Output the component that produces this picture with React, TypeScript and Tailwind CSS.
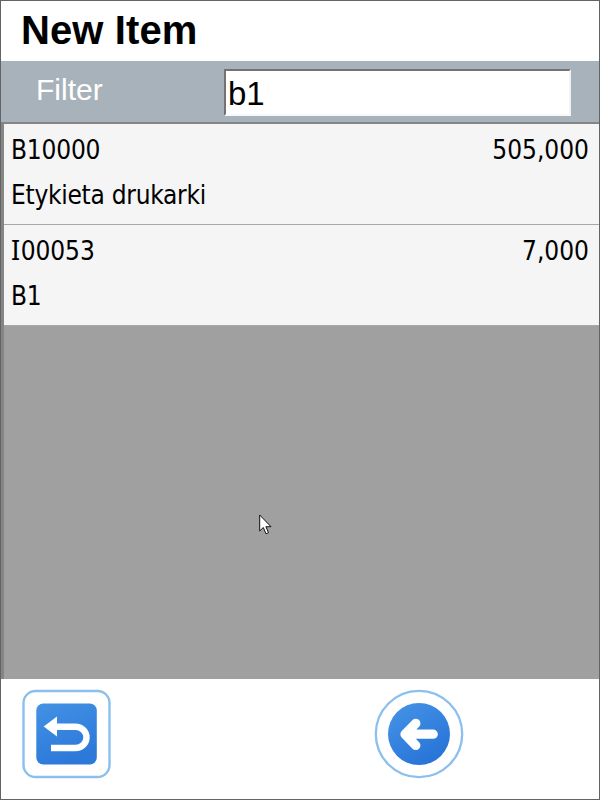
type Item = { code: string; name: string; qty: string };

const items: Item[] = [
  { code: 'B10000', name: 'Etykieta drukarki', qty: '505,000' },
  { code: 'I00053', name: 'B1', qty: '7,000' },
];

// The capital I carries serifs, so it comes from a different family.
function Code({ value }: { value: string }) {
  if (!value.startsWith('I')) return <span className="tracking-[-0.2px]">{value}</span>;
  return (
    <span className="tracking-[-0.1px]">
      <span className="font-['Noto_Sans'] text-[27px] leading-none tracking-[0.6px]">I</span>
      {value.slice(1)}
    </span>
  );
}

function Row({ item }: { item: Item }) {
  return (
    <div className="flex h-[101px] flex-col border-b border-[#a8a8a8] bg-[#f5f5f5] pl-[7px] pr-[10px] pt-1 text-[26px] leading-[45px] text-black">
      <div className="flex h-[45px] justify-between">
        <Code value={item.code} />
        <span>{item.qty}</span>
      </div>
      <div className="h-[45px] whitespace-nowrap tracking-[-0.27px]">{item.name}</div>
    </div>
  );
}

function UndoButton() {
  return (
    <button className="block h-[90px] w-[90px]" aria-label="Undo">
      <svg width="90" height="90" viewBox="0 0 90 90">
        <defs>
          <linearGradient id="undoFill" x1="0" y1="0" x2="0.4" y2="1">
            <stop offset="0" stopColor="#4392e4" />
            <stop offset="1" stopColor="#2c79da" />
          </linearGradient>
        </defs>
        <rect x="2.5" y="2" width="86" height="86" rx="12" fill="#fff" stroke="#8bbfee" strokeWidth="2.4" />
        <rect x="15.3" y="14.5" width="60.5" height="61" rx="7" fill="url(#undoFill)" />
        <path d="M34 37.8H54.5A11 10.6 0 0 1 54.5 59H30" fill="none" stroke="#fff" strokeWidth="6.4" />
        <path d="M22.7 37.5L36 27.4V47.4Z" fill="#fff" />
      </svg>
    </button>
  );
}

function BackButton() {
  return (
    <button className="block h-[90px] w-[90px]" aria-label="Back">
      <svg width="90" height="90" viewBox="0 0 90 90">
        <defs>
          <linearGradient id="backFill" x1="0" y1="0" x2="0.6" y2="1">
            <stop offset="0" stopColor="#4695e6" />
            <stop offset="1" stopColor="#2874d8" />
          </linearGradient>
        </defs>
        <circle cx="45" cy="45" r="43.2" fill="#fff" stroke="#8bbfee" strokeWidth="2.3" />
        <circle cx="45" cy="45" r="31" fill="url(#backFill)" />
        <path d="M41.8 34.4L31 45.2L41.8 56.4M33 45.2H59.2" fill="none" stroke="#fff" strokeWidth="9.3" strokeLinecap="round" strokeLinejoin="round" />
      </svg>
    </button>
  );
}

function Cursor() {
  return (
    <svg className="absolute left-[258px] top-[513px]" width="13" height="21" viewBox="0 0 13 21">
      <path d="M.7 1V17L4.3 13.5L7 19.8L9.5 18.7L6.9 12.7H12Z" fill="#fff" stroke="#111" strokeWidth="1" />
    </svg>
  );
}

export default function App() {
  return (
    <div className="relative flex h-[800px] w-[600px] flex-col overflow-hidden border border-[#646464] bg-white font-['Liberation_Sans',Arial,sans-serif]">
      <header className="h-[60px] shrink-0 pl-5 pt-px">
        <h1 className="text-[40px] font-bold leading-[56px] tracking-[0.1px] text-black">New Item</h1>
      </header>
      <div className="flex h-[61px] shrink-0 bg-[#a8b2ba] pt-[7px]">
        <label htmlFor="filter" className="w-[223px] pl-[35px] text-[30px] leading-[43px] text-white">
          Filter
        </label>
        <input
          id="filter"
          defaultValue="b1"
          className="mt-px h-[47px] w-[347px] rounded-none border-2 border-b-[#f8f8f8] border-l-[#737373] border-r-[#f0f2f3] border-t-[#737373] bg-white pl-0.5 pt-0.5 text-[33px] leading-[41px] text-black outline-none"
        />
      </div>
      <main className="h-[557px] shrink-0 border-l-[3px] border-t-2 border-[#858585] bg-[#a0a0a0] font-['DejaVu_Sans_Condensed','DejaVu_Sans',sans-serif] [font-stretch:condensed]">
        {items.map((item) => (
          <Row key={item.code} item={item} />
        ))}
      </main>
      <footer className="flex flex-1 pl-5 pt-2.5">
        <UndoButton />
        <div className="pl-[263px]">
          <BackButton />
        </div>
      </footer>
      <Cursor />
    </div>
  );
}
